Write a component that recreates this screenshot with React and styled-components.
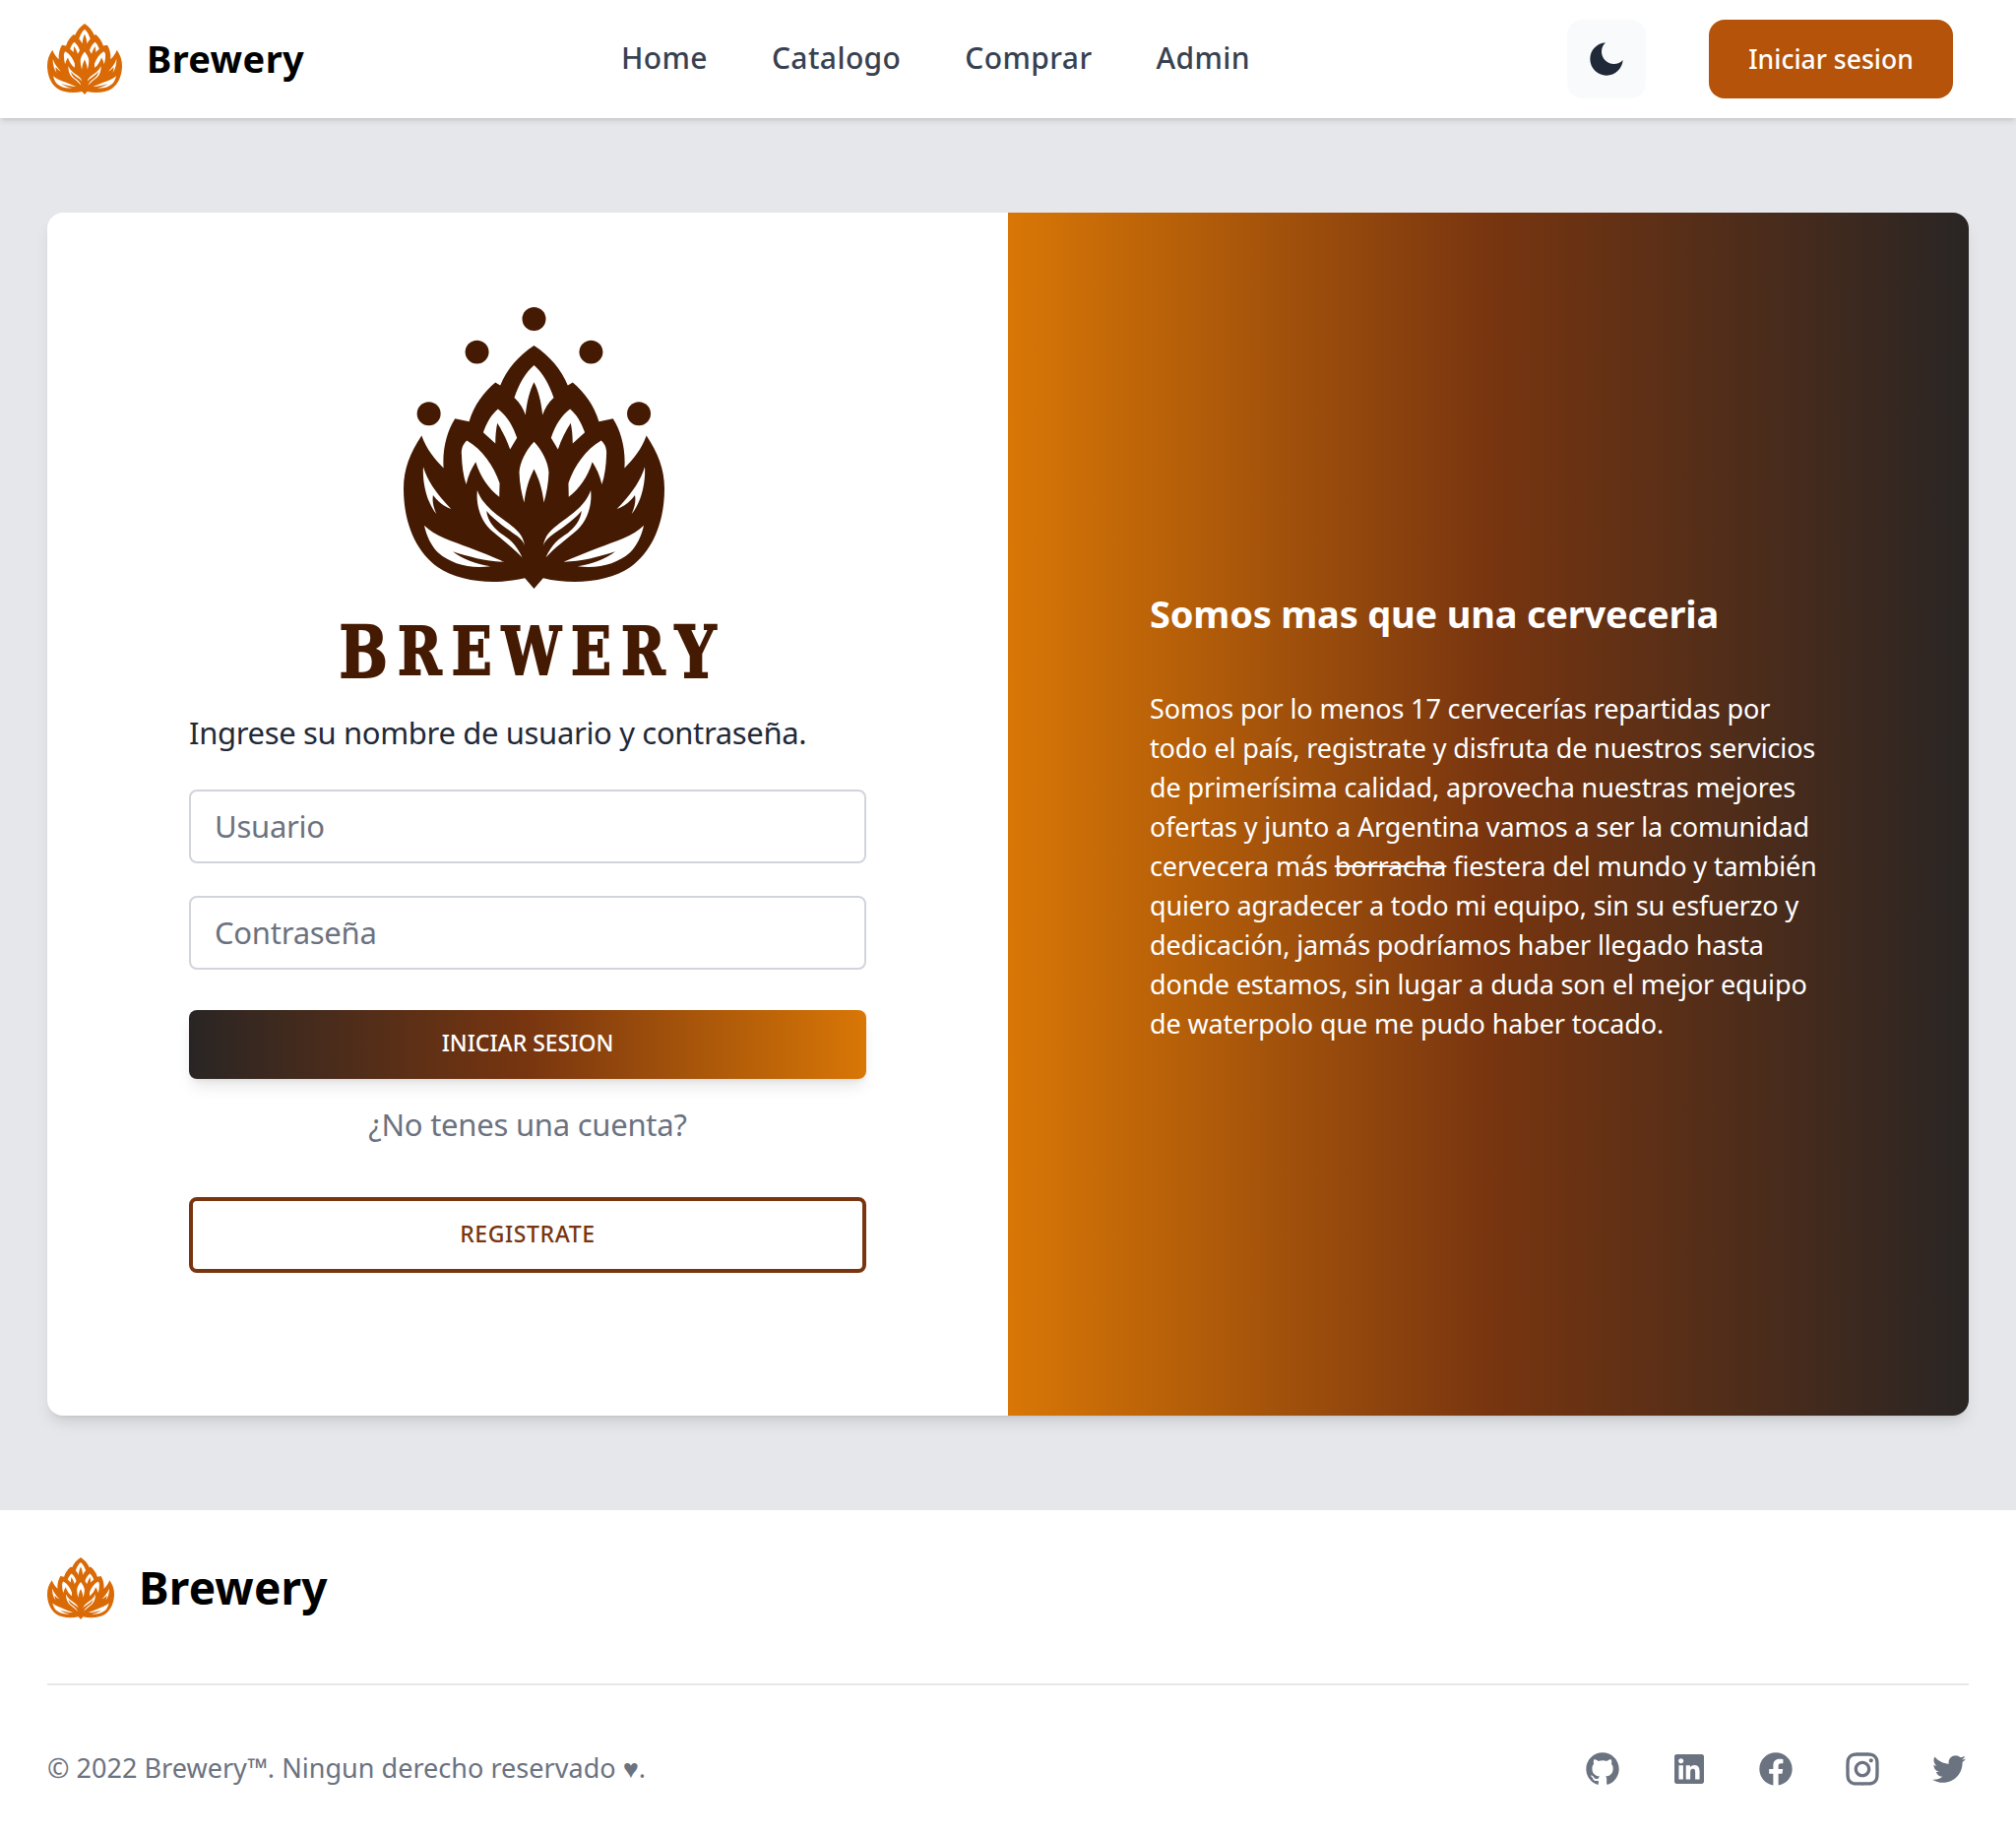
import React from "react";
import styled, { createGlobalStyle } from "styled-components";
import { RiGithubFill, RiLinkedinBoxFill, RiFacebookCircleFill, RiInstagramLine, RiTwitterFill, RiMoonFill } from "react-icons/ri";

const Global = createGlobalStyle`
  * { box-sizing: border-box; }
  html, body { margin: 0; padding: 0; background: #fff; }
  body { font-family: "Noto Sans", "Open Sans", sans-serif; }
`;

const Page = styled.div`display: flex; flex-direction: column; min-height: 1864px;`;

const Nav = styled.header`
  position: relative; z-index: 2;
  height: 120px; padding: 0 64px 0 48px; background: #fff;
  display: grid; grid-template-columns: 1fr auto 1fr; align-items: center;
  box-shadow: 0 4px 6px -1px rgba(0,0,0,.1), 0 2px 4px -2px rgba(0,0,0,.1);
`;
const Brand = styled.a`
  display: flex; align-items: center; gap: ${p => p.$gap}px;
  color: #000; font-weight: 700; font-size: ${p => p.$size}px; line-height: 1;
  letter-spacing: ${p => p.$ls}px;
`;
const BrandName = styled.span`padding-bottom: ${p => p.$lift}px;`;
const NavLinks = styled.nav`display: flex; gap: 65px; margin-left: -131px; padding-bottom: 2px;`;
const NavLink = styled.a`color: #374151; font-size: 30px; font-weight: 500; line-height: 40px; letter-spacing: .4px;`;
const NavRight = styled.div`display: flex; justify-content: flex-end; gap: 64px;`;
const ThemeButton = styled.button`
  width: 80px; height: 80px; border: 0; border-radius: 16px; background: #f9fafb;
  color: #1f2937; display: flex; align-items: center; justify-content: center; padding: 0;
`;
const LoginButton = styled.button`
  width: 248px; height: 80px; border: 0; border-radius: 16px; background: #b45309; color: #fff;
  font: 500 26.5px "Noto Sans", sans-serif; letter-spacing: 0; padding: 0;
`;

const Main = styled.main`flex: 0 0 1414px; background: #e5e7eb; padding: 96px 48px;`;
const Card = styled.section`
  height: 1222px; display: grid; grid-template-columns: 1fr 1fr; border-radius: 16px; overflow: hidden;
  background: #fff; box-shadow: 0 10px 15px -3px rgba(0,0,0,.1), 0 4px 6px -4px rgba(0,0,0,.1);
`;
const FormPane = styled.div`padding: 96px 144px 0; display: flex; flex-direction: column;`;
const HopLarge = styled.svg`width: 265px; height: 286px; color: #451a03; align-self: center; margin-left: 12px; display: block;`;
const Wordmark = styled.div`
  margin-top: 34px; height: 60px; display: flex; justify-content: center; align-items: flex-end;
  font-family: "DejaVu Serif", serif; font-weight: 700; color: #451a03;
  font-size: 67px; line-height: 60px; letter-spacing: 12.7px; padding-left: 12.7px;
  -webkit-text-stroke: 2px #451a03; transform: scaleX(.8);
`;
const Cap = styled.span`font-size: 73px; line-height: 60px;`;
const Lead = styled.p`margin: 30px 0 0; color: #1f2937; font-size: 31px; line-height: 44px; letter-spacing: -.35px;`;
const Field = styled.input`
  display: block; width: 100%; height: 75px; margin-top: ${p => p.$top}px; padding: 0 24px 2px;
  border: 2px solid #d1d5db; border-radius: 8px; background: #fff; color: #111827;
  font: 400 31px "Noto Sans", sans-serif; letter-spacing: -.25px; outline: none;
  &::placeholder { color: #6b7280; opacity: 1; }
`;
const Primary = styled.button`
  display: block; width: 100%; height: 70px; margin-top: 41px; padding: 0 0 4px; border: 0; border-radius: 8px; color: #fff;
  background: linear-gradient(to right, #292524, #78350f, #d97706);
  font: 500 23px "Noto Sans", sans-serif; letter-spacing: 0;
  box-shadow: 0 10px 15px -3px rgba(0,0,0,.1), 0 4px 6px -4px rgba(0,0,0,.1);
`;
const Hint = styled.p`margin: 24px 0 0; text-align: center; color: #6b7280; font-size: 31px; line-height: 44px; letter-spacing: -.25px;`;
const Secondary = styled.button`
  display: block; width: 100%; height: 77px; margin-top: 52px; padding: 0 0 3px; border: 4px solid #78350f; border-radius: 8px;
  background: #fff; color: #78350f; font: 500 23px "Noto Sans", sans-serif; letter-spacing: .6px;
`;

const InfoPane = styled.div`
  padding: 0 144px; display: flex; flex-direction: column; justify-content: center; color: #fff;
  background: linear-gradient(to right, #d97706, #78350f, #292524);
`;
const InfoTitle = styled.h2`margin: 0 0 49px; font-size: 38px; line-height: 56px; font-weight: 700; letter-spacing: -.2px;`;
const InfoText = styled.p`
  margin: 0; font-size: 27px; line-height: 40px; letter-spacing: -.13px;
  & s { text-decoration: line-through; }
`;

const Footer = styled.footer`flex: 1; background: #fff; padding: 48px 48px 0;`;
const FooterTop = styled.div`height: 128px;`;
const Divider = styled.hr`margin: 0; border: 0; height: 2px; background: #e5e7eb;`;
const FooterBottom = styled.div`display: flex; justify-content: space-between; align-items: center; padding-top: 64px;`;
const Copy = styled.span`color: #6b7280; font-size: 27px; line-height: 40px; letter-spacing: .03px; padding-bottom: 2px;`;
const Socials = styled.div`display: flex; gap: 48px; color: #6b7280;`;

function Hop({ dots }) {
  const half = (
    <>
      <path d="M378 377C358 393 343 420 333 448L370 482C370 460 372 440 376 420C392 445 405 470 415 500L436 465C423 425 403 395 378 377Z" />
      <path d="M283 473C270 485 266 500 267 515C268 550 272 580 281 607C287 580 297 558 310 538C325 585 350 620 382 645L383 603C365 550 330 500 283 473Z" />
      <path d="M315 625C310 670 325 715 355 745C390 775 425 800 452 830C435 790 410 770 385 755C365 740 345 715 343 688C370 720 410 745 438 765C450 775 458 785 460 795C455 760 435 745 410 725C375 700 330 670 315 625Z" />
      <path d="M153 732C185 765 240 780 290 800C330 815 365 830 398 843C345 843 290 828 240 812C270 835 310 850 355 857C290 865 235 850 195 815C175 795 160 765 153 732Z" />
      <path d="M150 553C147 600 160 660 190 697C180 675 177 655 180 640C195 660 215 675 235 682C205 650 165 605 150 553Z" />
    </>
  );
  return (
    <>
      {dots && (
        <g fill="currentColor">
          <circle cx="488" cy="102" r="36" />
          <circle cx="314" cy="203" r="36" />
          <circle cx="662" cy="203" r="36" />
          <circle cx="167" cy="391" r="36" />
          <circle cx="808" cy="391" r="36" />
        </g>
      )}
      <path fill="currentColor" d="M488 183C440 215 405 255 385 305L370 296C335 325 305 365 290 415L247 406C222 445 208 500 212 557C185 530 160 500 145 458C110 510 90 560 90 620C90 720 125 810 195 860C260 905 370 915 460 893L488 925L516 893C606 915 716 905 781 860C851 810 886 720 886 620C886 560 866 510 831 458C816 500 791 530 764 557C768 500 754 445 729 406L686 415C671 365 641 325 606 296L591 305C571 255 536 215 488 183Z" />
      <g fill="#fff">
        <path d="M488 243C462 265 442 300 428 342C445 358 455 375 462 395C466 355 475 320 488 295C501 320 510 355 514 395C521 375 531 358 548 342C534 300 514 265 488 243Z" />
        <path d="M488 477C462 505 445 540 443 570C444 605 450 635 458 662C463 620 473 590 488 560C503 590 513 620 518 662C526 635 532 605 533 570C531 540 514 505 488 477Z" />
        {half}
        <g transform="matrix(-1 0 0 1 976 0)">{half}</g>
      </g>
    </>
  );
}

const HopSmall = styled.svg`width: ${p => p.$w}px; height: ${p => p.$h}px; color: #d96a05; display: block; flex: none;`;

export default function App() {
  return (
    <Page>
      <Global />
      <Nav>
        <Brand $gap={25} $size={38} $ls={0.4}>
          <HopSmall $w={76} $h={72} viewBox="90 183 796 742" preserveAspectRatio="none"><Hop /></HopSmall>
          <BrandName $lift={3}>Brewery</BrandName>
        </Brand>
        <NavLinks>
          <NavLink>Home</NavLink>
          <NavLink>Catalogo</NavLink>
          <NavLink>Comprar</NavLink>
          <NavLink>Admin</NavLink>
        </NavLinks>
        <NavRight>
          <ThemeButton aria-label="Tema"><RiMoonFill size={40} /></ThemeButton>
          <LoginButton>Iniciar sesion</LoginButton>
        </NavRight>
      </Nav>
      <Main>
        <Card>
          <FormPane>
            <HopLarge viewBox="90 66 796 859"><Hop dots /></HopLarge>
            <Wordmark><Cap>B</Cap>REWER<Cap>Y</Cap></Wordmark>
            <Lead>Ingrese su nombre de usuario y contraseña.</Lead>
            <Field $top={36} placeholder="Usuario" />
            <Field $top={33} placeholder="Contraseña" />
            <Primary>INICIAR SESION</Primary>
            <Hint>¿No tenes una cuenta?</Hint>
            <Secondary>REGISTRATE</Secondary>
          </FormPane>
          <InfoPane>
            <InfoTitle>Somos mas que una cerveceria</InfoTitle>
            <InfoText>
              Somos por lo menos 17 cervecerías repartidas por todo el país, registrate y disfruta de nuestros servicios de primerísima calidad, aprovecha nuestras mejores ofertas y junto a Argentina vamos a ser la comunidad cervecera más <s>borracha</s> fiestera del mundo y también quiero agradecer a todo mi equipo, sin su esfuerzo y dedicación, jamás podríamos haber llegado hasta donde estamos, sin lugar a duda son el mejor equipo de waterpolo que me pudo haber tocado.
            </InfoText>
          </InfoPane>
        </Card>
      </Main>
      <Footer>
        <FooterTop>
          <Brand $gap={25} $size={46} $ls={0.2}>
            <HopSmall $w={68} $h={63} viewBox="90 183 796 742" preserveAspectRatio="none"><Hop /></HopSmall>
            <BrandName $lift={4}>Brewery</BrandName>
          </Brand>
        </FooterTop>
        <Divider />
        <FooterBottom>
          <Copy>© 2022 Brewery™. Ningun derecho reservado ♥.</Copy>
          <Socials>
            <RiGithubFill size={40} />
            <RiLinkedinBoxFill size={40} />
            <RiFacebookCircleFill size={40} />
            <RiInstagramLine size={40} />
            <RiTwitterFill size={40} />
          </Socials>
        </FooterBottom>
      </Footer>
    </Page>
  );
}
